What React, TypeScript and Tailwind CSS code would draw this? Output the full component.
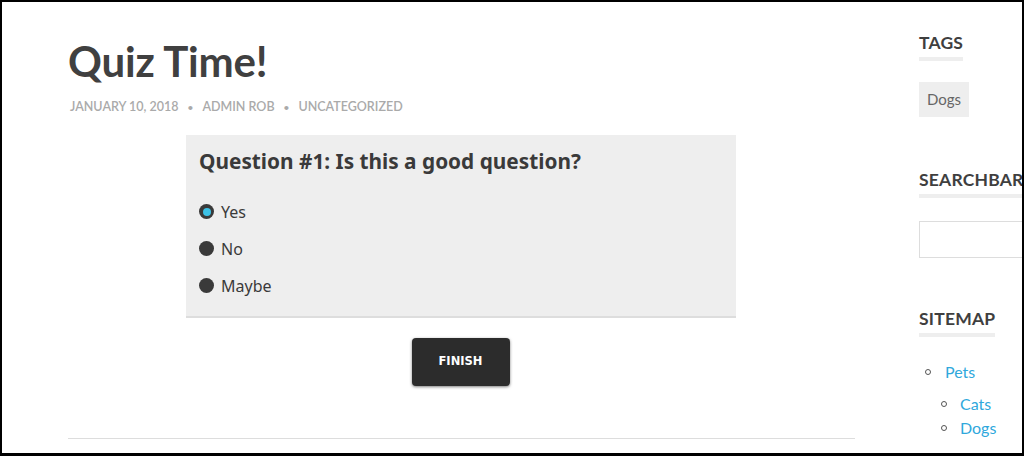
import React from "react";

function Radio({ checked }: { checked?: boolean }) {
  return (
    <span className="flex h-[15px] w-[15px] items-center justify-center rounded-full bg-[#3a3a3a]">
      {checked && <span className="h-[8px] w-[8px] rounded-full bg-[#3cc2e6]" />}
    </span>
  );
}

export default function App() {
  return (
    <div className="h-[456px] w-[1024px] overflow-hidden border-2 border-b-[3px] border-black bg-white">
      <div className="flex h-full">
        <main className="ml-[66px] w-[787px] shrink-0 font-['Lato',sans-serif]">
          <h1 className="mt-[31px] text-[42px] font-bold leading-[56px] tracking-[-0.2px] text-[#404040]">Quiz Time!</h1>
          <div className="mt-[9px] flex items-center text-[12.5px] font-semibold uppercase text-[#aaaaaa]">
            <span className="ml-[2px]">January 10, 2018</span>
            <span className="mx-[9px] text-[10px]">•</span>
            <span>Admin Rob</span>
            <span className="mx-[9px] text-[10px]">•</span>
            <span>Uncategorized</span>
          </div>
          <div className="ml-[118px] mt-[18px] w-[550px] border-b-2 border-[#dddddd] bg-[#eeeeee] px-[13px] pb-[18px] pt-[12px] font-['Noto_Sans',sans-serif] text-[#3a3a3a]">
            <h2 className="text-[20.8px] font-bold leading-[28px]">Question #1: Is this a good question?</h2>
            <div className="mt-[25px] flex flex-col gap-[13px] text-[16px] leading-[24px]">
              {[
                ["Yes", true],
                ["No", false],
                ["Maybe", false],
              ].map(([t, c]) => (
                <label key={t as string} className="flex items-center gap-[7px]">
                  <Radio checked={c as boolean} />
                  <span>{t as string}</span>
                </label>
              ))}
            </div>
          </div>
          <div className="mt-[20px] flex justify-center">
            <button className="ml-[-2px] h-[48px] w-[98px] rounded-[4px] bg-[#2c2c2c] font-['DejaVu_Sans',sans-serif] text-[11.5px] font-bold text-white shadow-[0_1px_3px_rgba(0,0,0,0.5)]">
              FINISH
            </button>
          </div>
          <div className="mt-[52px] border-t border-[#dddddd]" />
        </main>
        <aside className="ml-[64px] w-[160px] shrink-0 font-['Lato',sans-serif]">
          <h3 className="mt-[28px] inline-block border-b-4 border-[#eeeeee] pb-[1px] text-[17.5px] font-bold uppercase tracking-[0.2px] text-[#3f3f3f]">Tags</h3>
          <div className="mt-[21px]">
            <span className="inline-block bg-[#eeeeee] px-[8px] py-[6px] text-[15px] text-[#666666]">Dogs</span>
          </div>
          <h3 className="mt-[50px] inline-block whitespace-nowrap border-b-4 border-[#eeeeee] pb-[1px] text-[17.5px] font-bold uppercase tracking-[0.2px] text-[#3f3f3f]">Searchbar</h3>
          <div className="mt-[23px] h-[37px] w-[140px] border border-[#dddddd]" />
          <h3 className="mt-[48px] inline-block border-b-4 border-[#eeeeee] pb-[1px] text-[17.5px] font-bold uppercase tracking-[0.2px] text-[#3f3f3f]">Sitemap</h3>
          <ul className="mt-[23px] text-[16px] text-[#2fa8dc]">
            <li className="flex items-center">
              <span className="ml-[6px] mr-[14px] h-[6px] w-[6px] rounded-full border border-[#555]" />
              Pets
            </li>
            <li className="ml-[16px] mt-[8px] flex items-center">
              <span className="ml-[6px] mr-[13px] h-[6px] w-[6px] rounded-full border border-[#555]" />
              Cats
            </li>
            <li className="ml-[16px] mt-[0px] flex items-center">
              <span className="ml-[6px] mr-[13px] h-[6px] w-[6px] rounded-full border border-[#555]" />
              Dogs
            </li>
          </ul>
        </aside>
      </div>
    </div>
  );
}
